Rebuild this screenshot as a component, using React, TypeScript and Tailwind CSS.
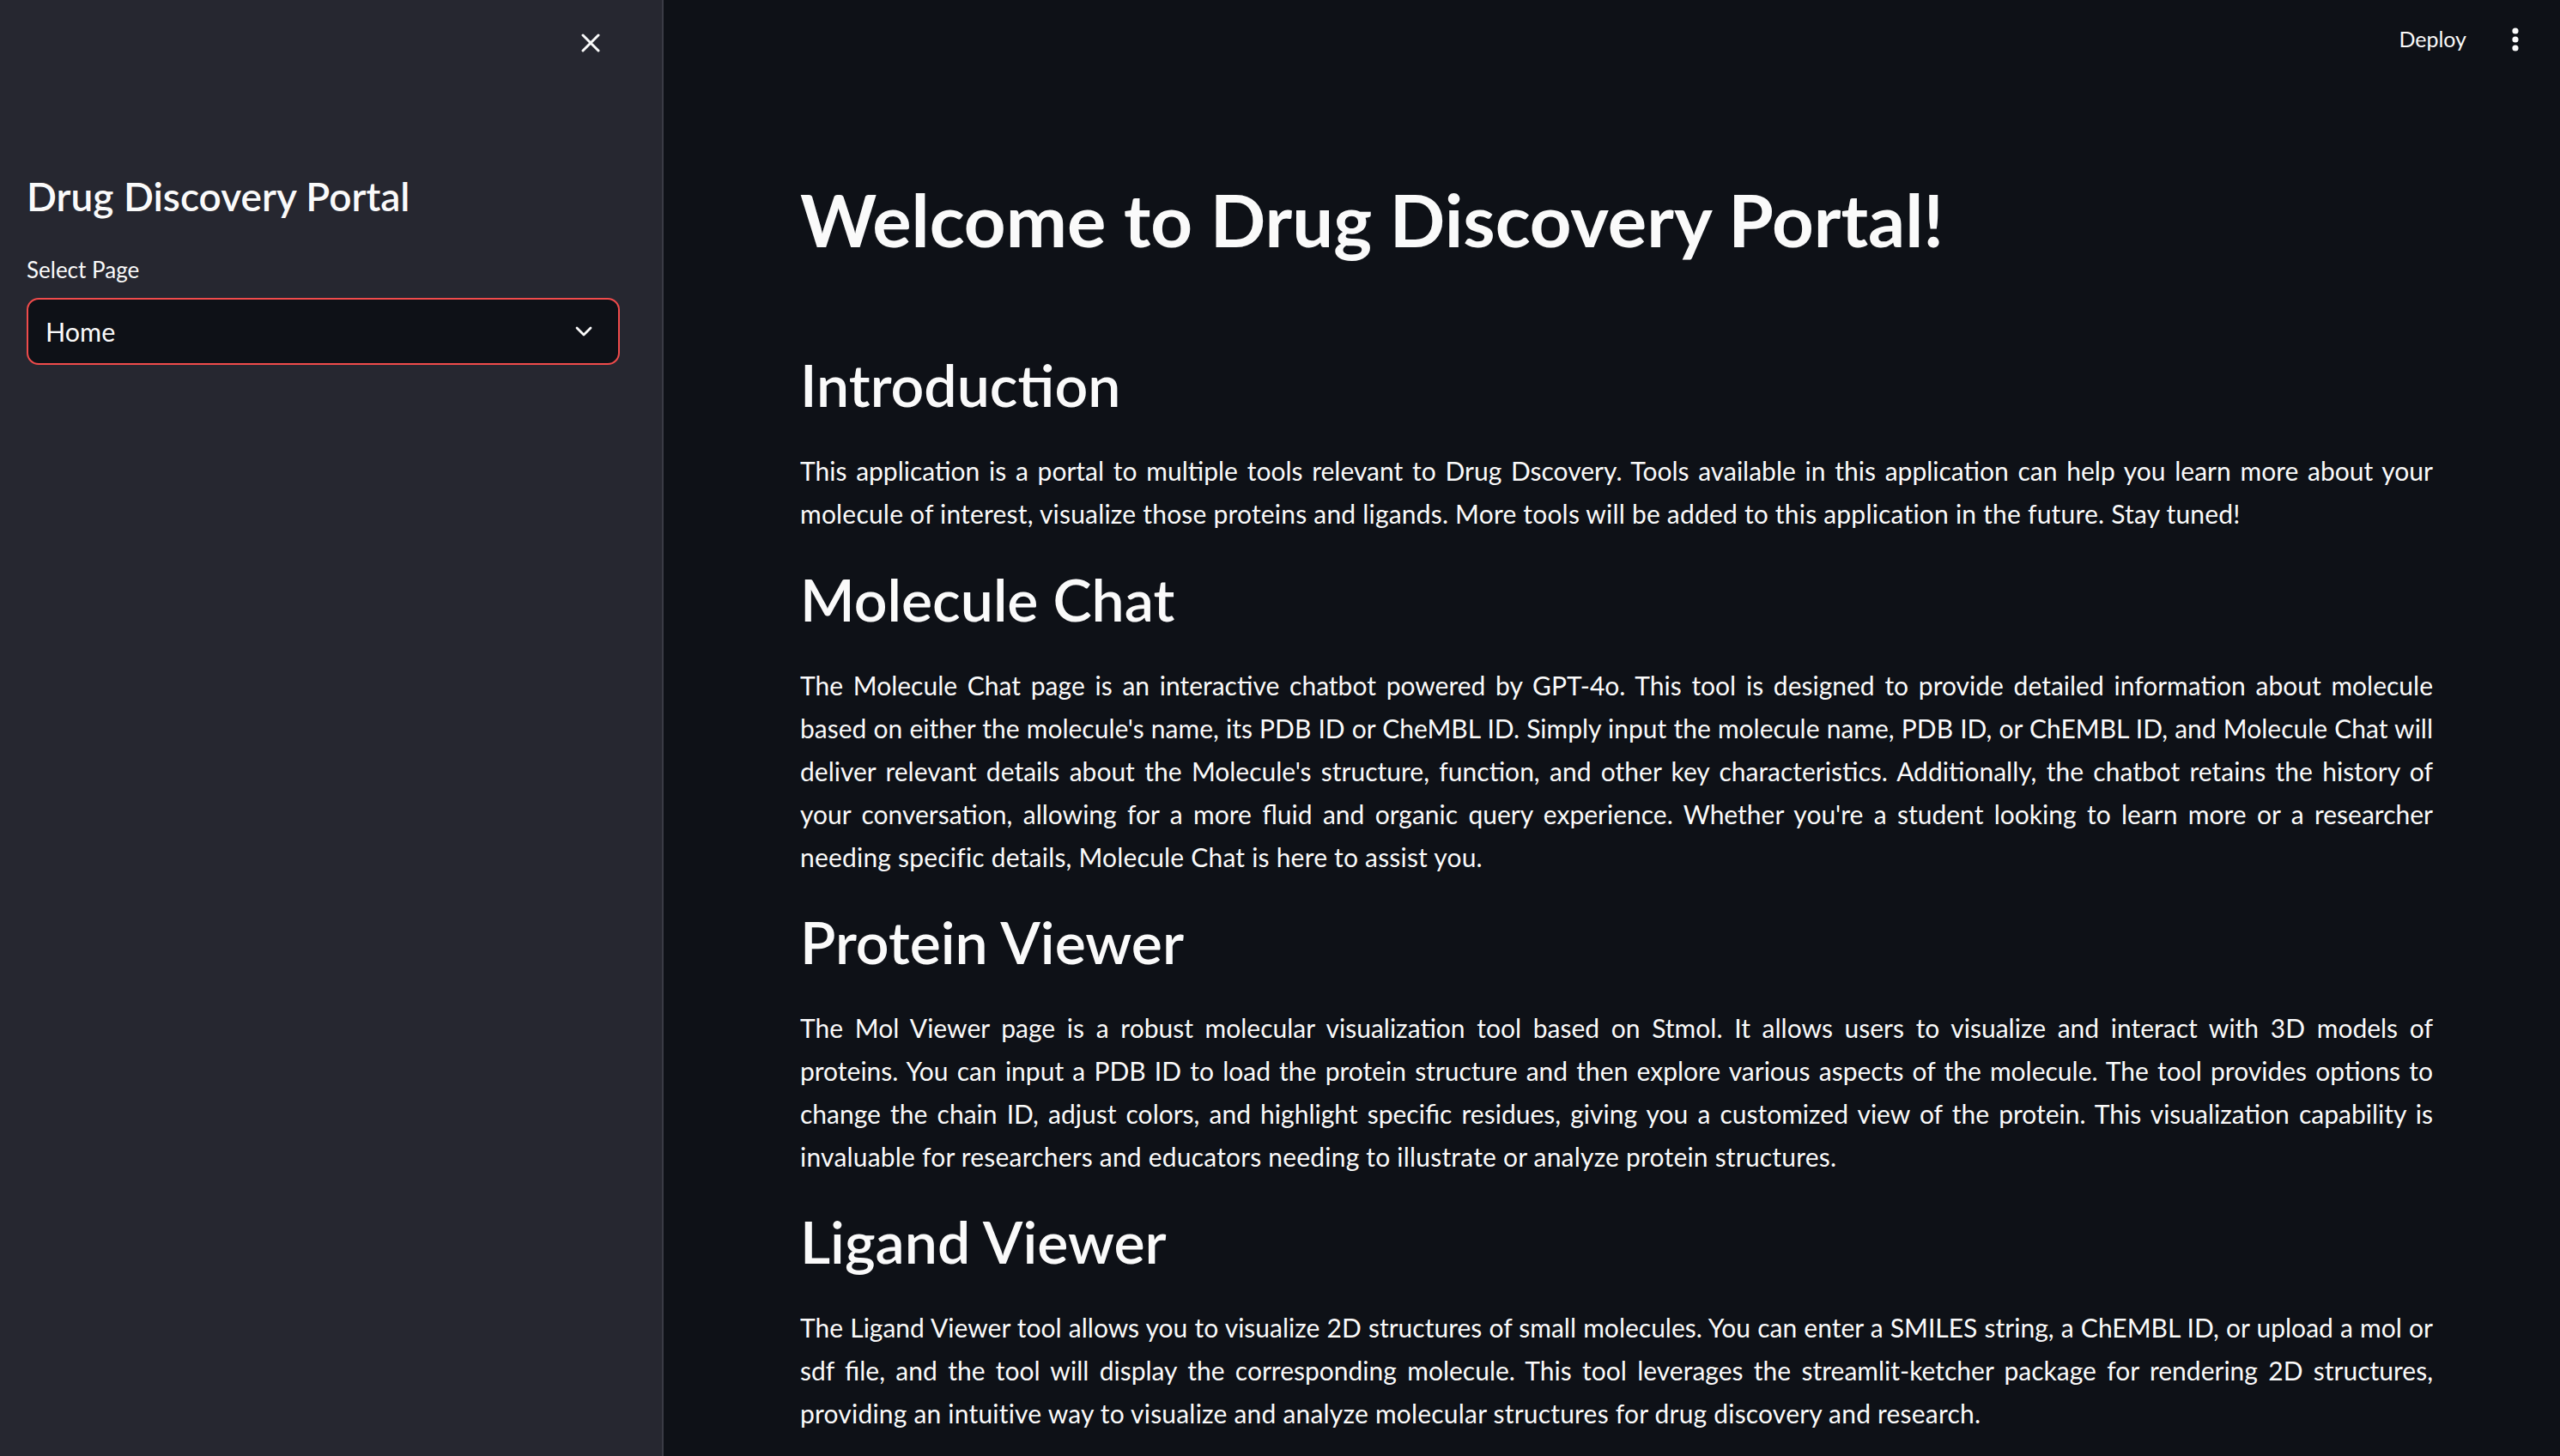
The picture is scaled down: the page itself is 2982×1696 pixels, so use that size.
import React from "react";

type Para = string[];

const intro: Para = [
  "This application is a portal to multiple tools relevant to Drug Dscovery. Tools available in this application can help you learn more about your",
  "molecule of interest, visualize those proteins and ligands. More tools will be added to this application in the future. Stay tuned!",
];

const chat: Para = [
  "The Molecule Chat page is an interactive chatbot powered by GPT-4o. This tool is designed to provide detailed information about molecule",
  "based on either the molecule's name, its PDB ID or CheMBL ID. Simply input the molecule name, PDB ID, or ChEMBL ID, and Molecule Chat will",
  "deliver relevant details about the Molecule's structure, function, and other key characteristics. Additionally, the chatbot retains the history of",
  "your conversation, allowing for a more fluid and organic query experience. Whether you're a student looking to learn more or a researcher",
  "needing specific details, Molecule Chat is here to assist you.",
];

const protein: Para = [
  "The Mol Viewer page is a robust molecular visualization tool based on Stmol. It allows users to visualize and interact with 3D models of",
  "proteins. You can input a PDB ID to load the protein structure and then explore various aspects of the molecule. The tool provides options to",
  "change the chain ID, adjust colors, and highlight specific residues, giving you a customized view of the protein. This visualization capability is",
  "invaluable for researchers and educators needing to illustrate or analyze protein structures.",
];

const ligand: Para = [
  "The Ligand Viewer tool allows you to visualize 2D structures of small molecules. You can enter a SMILES string, a ChEMBL ID, or upload a mol or",
  "sdf file, and the tool will display the corresponding molecule. This tool leverages the streamlit-ketcher package for rendering 2D structures,",
  "providing an intuitive way to visualize and analyze molecular structures for drug discovery and research.",
];

function Paragraph({ lines, className }: { lines: Para; className?: string }) {
  return (
    <div className={"text-[30px] leading-[50px] text-[#fafafa] " + (className ?? "")}>
      {lines.map((l, i) =>
        i < lines.length - 1 ? (
          <div key={i} className="text-justify [text-align-last:justify]">
            {l}
          </div>
        ) : (
          <div key={i} className="text-left tracking-[0.2px]">
            {l}
          </div>
        )
      )}
    </div>
  );
}

function H2({ children, className }: { children: React.ReactNode; className?: string }) {
  return (
    <h2 className={"text-[68px] leading-[68px] font-semibold text-[#fafafa] " + (className ?? "")}>
      {children}
    </h2>
  );
}

export default function App() {
  return (
    <div className="flex h-[1696px] w-full overflow-hidden bg-[#0e1117] font-['Lato',_sans-serif] text-[#fafafa]">
      {/* Sidebar */}
      <aside className="flex w-[773px] shrink-0 flex-col border-r-2 border-[#3a3b45] bg-[#262730] pl-[31px] pr-[49px]">
        <div className="flex h-[100px] shrink-0 items-center justify-end pr-[23px]">
          <svg width="22" height="22" viewBox="0 0 22 22" fill="none">
            <path d="M2 2 L20 20 M20 2 L2 20" stroke="#fafafa" strokeWidth="3" strokeLinecap="round" />
          </svg>
        </div>
        <div className="mt-[106px] text-[46px] leading-[46px] font-semibold">Drug Discovery Portal</div>
        <div className="mt-[49px] text-[26px] leading-[26px]">Select Page</div>
        <div className="mt-[20px] flex h-[78px] shrink-0 items-center justify-between rounded-[14px] border-2 border-[#f04b4b] bg-[#0e1117] pl-[20px] pr-[30px]">
          <span className="text-[30.5px] leading-[30px]">Home</span>
          <svg width="20" height="12" viewBox="0 0 20 12" fill="none">
            <path d="M2 2 L10 10 L18 2" stroke="#fafafa" strokeWidth="2.8" strokeLinecap="round" strokeLinejoin="round" />
          </svg>
        </div>
      </aside>

      {/* Main */}
      <main className="flex min-w-0 flex-1 flex-col">
        <header className="flex h-[91px] shrink-0 items-center justify-end pr-[40px]">
          <span className="text-[25px] leading-[25px]">Deploy</span>
          <div className="ml-[45px] flex w-[24px] justify-center">
            <svg width="8" height="28" viewBox="0 0 8 28" fill="#fafafa">
              <circle cx="4" cy="4" r="3.6" />
              <circle cx="4" cy="14" r="3.6" />
              <circle cx="4" cy="24" r="3.6" />
            </svg>
          </div>
        </header>

        <div className="flex shrink-0 flex-col pl-[159px] pr-[148px]">
          <h1 className="mt-[122px] text-[85px] leading-[85px] font-bold text-[#fafafa]">
            Welcome to Drug Discovery Portal!
          </h1>

          <H2 className="mt-[116px]">Introduction</H2>
          <Paragraph lines={intro} className="mt-[41px]" />

          <H2 className="mt-[41px]">Molecule Chat</H2>
          <Paragraph lines={chat} className="mt-[41px]" />

          <H2 className="mt-[40px]">Protein Viewer</H2>
          <Paragraph lines={protein} className="mt-[41px]" />

          <H2 className="mt-[40px]">Ligand Viewer</H2>
          <Paragraph lines={ligand} className="mt-[41px]" />
        </div>
      </main>
    </div>
  );
}
